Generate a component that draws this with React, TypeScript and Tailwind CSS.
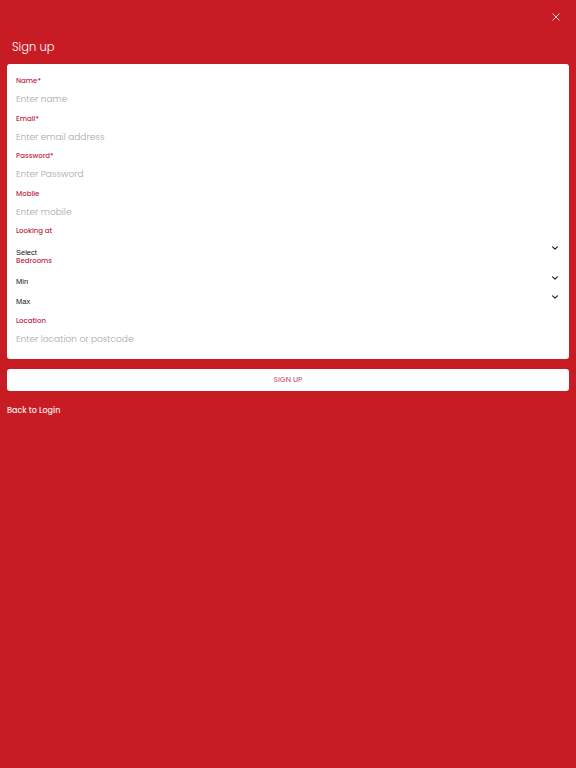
import React from "react";

const font = { fontFamily: "Poppins, 'Open Sans', 'Noto Sans', sans-serif" };
const arial = { fontFamily: "'Liberation Sans', Arial, sans-serif" };

function Chevron({ className = "" }: { className?: string }) {
  return (
    <svg viewBox="0 0 10 6" className={"w-[6px] h-[4px] " + className} fill="none" stroke="#222" strokeWidth="2" strokeLinecap="round" strokeLinejoin="round">
      <path d="M1 1l4 4 4-4" />
    </svg>
  );
}

function Label({ children }: { children: React.ReactNode }) {
  return <div className="h-[12px] leading-[12px] text-[7px] font-medium text-[#bd1f4a]">{children}</div>;
}

function TextField({ label, placeholder, type = "text" }: { label: string; placeholder: string; type?: string }) {
  return (
    <div className="flex flex-col">
      <Label>{label}</Label>
      <input
        type={type}
        placeholder={placeholder}
        className="h-[25.5px] w-full bg-transparent text-[9px] font-light text-[#333] placeholder:text-[#a6a6a6] outline-none"
        style={font}
      />
    </div>
  );
}

export default function App() {
  return (
    <div className="min-h-screen w-full bg-[#c81c24] px-[7px]" style={font}>
      <div className="flex justify-end h-[32px] pr-[9px] pt-[13px]">
        <svg viewBox="0 0 10 10" className="w-[8px] h-[8px]" stroke="#f8dadd" strokeWidth="1.2" strokeLinecap="round">
          <path d="M1 1l8 8M9 1l-8 8" />
        </svg>
      </div>
      <div className="h-[32px] pl-[5px] pt-[6px] text-[11.5px] leading-[18px] font-light text-white">Sign up</div>
      <div className="rounded-[3px] bg-white px-[9px] pt-[11px] pb-[6px]">
        <TextField label="Name*" placeholder="Enter name" />
        <TextField label="Email*" placeholder="Enter email address" type="email" />
        <TextField label="Password*" placeholder="Enter Password" />
        <TextField label="Mobile" placeholder="Enter mobile" />
        <Label>Looking at</Label>
        <div className="flex h-[19px] justify-between">
          <span className="mt-[11px] text-[7.5px] leading-[10px] text-[#111]" style={arial}>Select</span>
          <Chevron className="mt-[9px] mr-[2px]" />
        </div>
        <div className="h-[10px] leading-[10px] text-[7px] font-medium text-[#bd1f4a]">Bedrooms</div>
        <div className="flex h-[20px] justify-between">
          <span className="mt-[11px] text-[7.5px] leading-[10px] text-[#111]" style={arial}>Min</span>
          <Chevron className="mt-[10px] mr-[2px]" />
        </div>
        <div className="flex h-[20px] justify-between">
          <span className="mt-[11px] text-[7.5px] leading-[10px] text-[#111]" style={arial}>Max</span>
          <Chevron className="mt-[9px] mr-[2px]" />
        </div>
        <div className="mt-[9px]">
          <TextField label="Location" placeholder="Enter location or postcode" />
        </div>
      </div>
      <button className="mt-[10px] h-[22px] w-full rounded-[3px] bg-white text-[7.5px] text-[#c2416a]" style={font}>
        SIGN UP
      </button>
      <div className="mt-[14px] text-[8px] leading-[12px] font-medium text-[#fde8ea]">Back to Login</div>
    </div>
  );
}
